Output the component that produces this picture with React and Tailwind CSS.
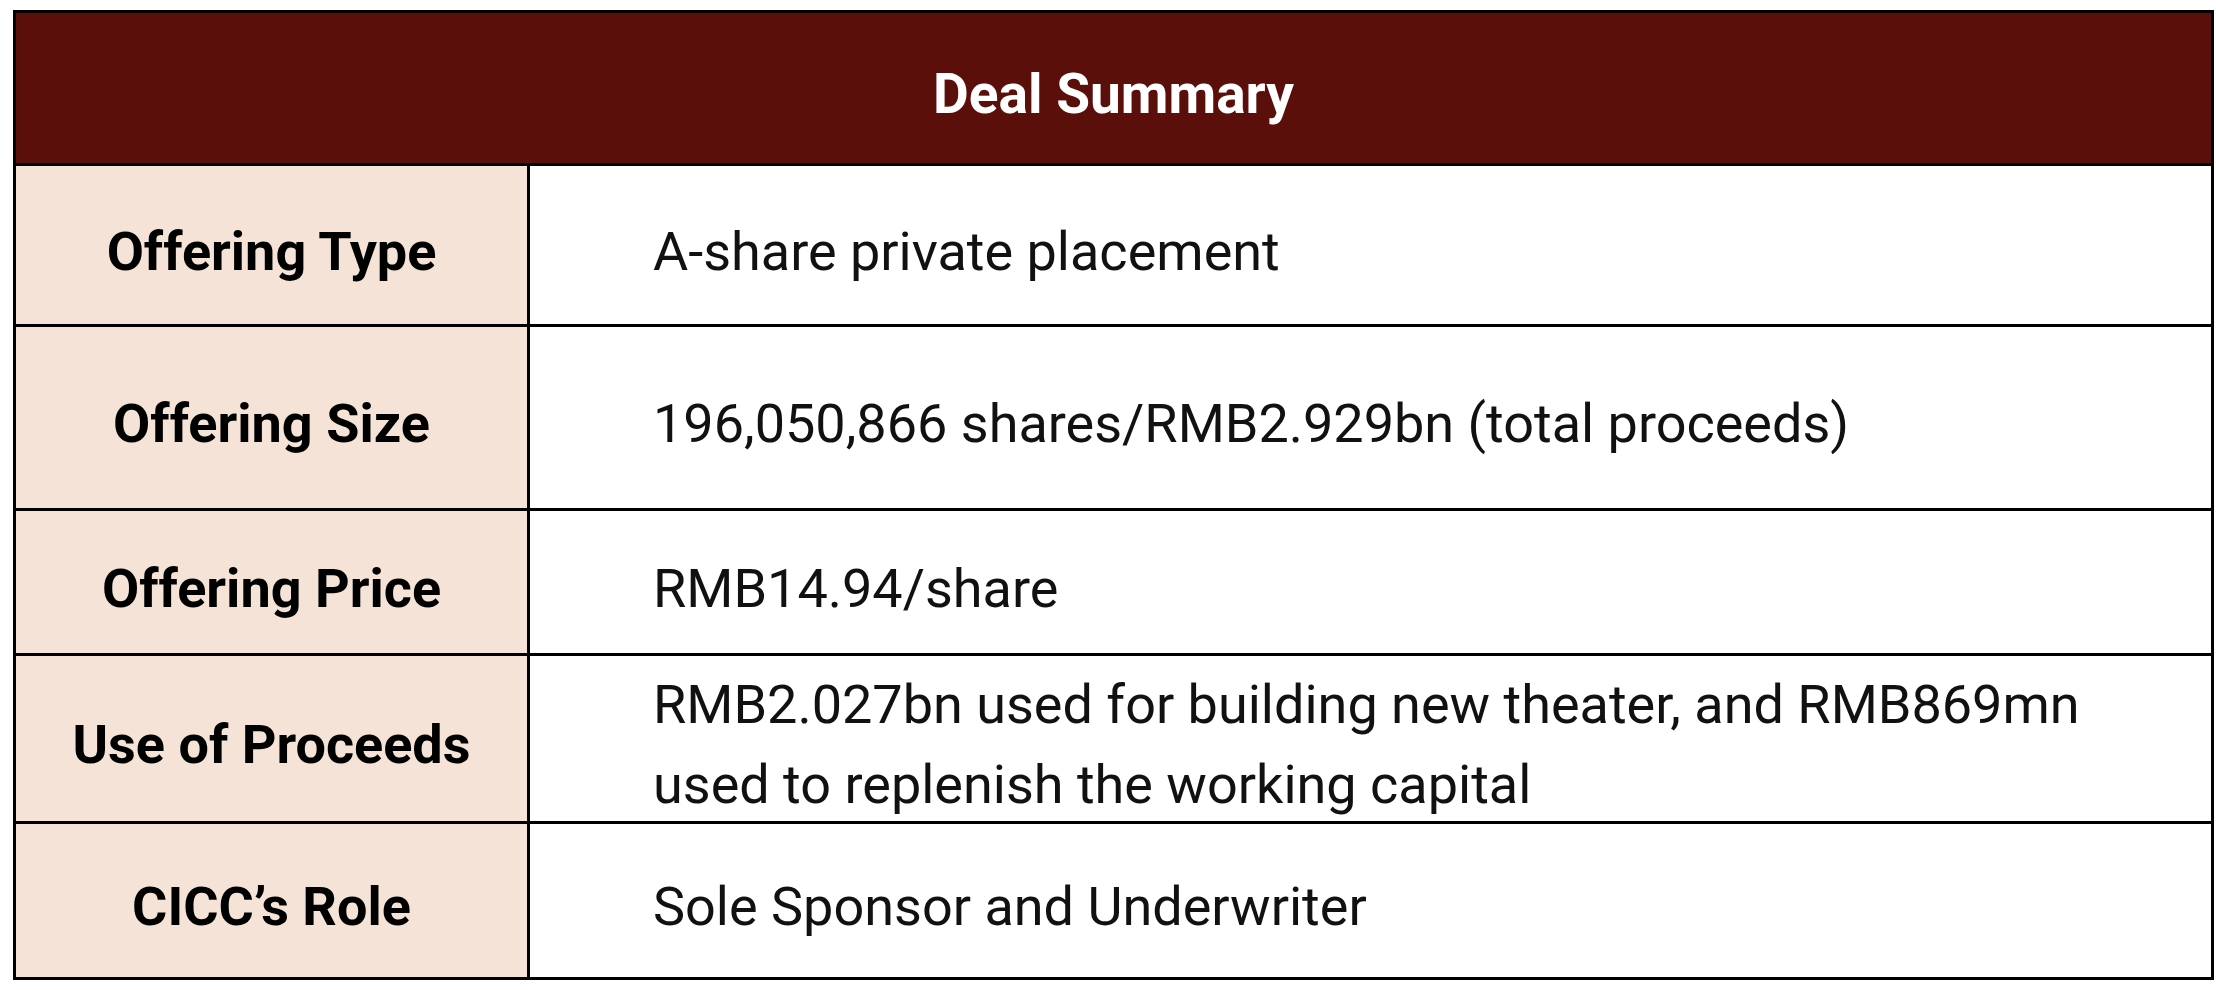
import React from "react";

const rows = [
  { label: "Offering Type", value: ["A-share private placement"], h: "h-[161px]", border: true },
  { label: "Offering Size", value: ["196,050,866 shares/RMB2.929bn (total proceeds)"], h: "h-[184px]", border: true },
  { label: "Offering Price", value: ["RMB14.94/share"], h: "h-[145px]", border: true },
  {
    label: "Use of Proceeds",
    value: ["RMB2.027bn used for building new theater, and RMB869mn", "used to replenish the working capital"],
    h: "h-[168px]",
    border: true,
  },
  { label: "CICC\u2019s Role", value: ["Sole Sponsor and Underwriter"], h: "h-[153px]", border: false },
];

export default function App() {
  return (
    <div className="min-h-screen bg-white pt-[10px] pl-[13px] font-['Roboto','Liberation_Sans',sans-serif]">
      <div className="w-[2201px] border-[3px] border-black flex flex-col">
        <div className="h-[153px] bg-[#5a0f0b] border-b-[3px] border-black flex items-center justify-center pt-[12px] text-white font-bold text-[55px] leading-none">
          Deal Summary
        </div>
        {rows.map((r, i) => (
          <div
            key={i}
            className={`flex ${r.h} ${r.border ? "border-b-[3px] border-black" : ""}`}
          >
            <div className="w-[514px] shrink-0 bg-[#f5e3d7] border-r-[3px] border-black flex items-center justify-center pt-[13px] text-black font-bold text-[54px] leading-none">
              {r.label}
            </div>
            <div className="flex-1 bg-white flex flex-col justify-center pl-[123px] pt-[13px] text-[#111] text-[54px] leading-[80px]">
              {r.value.map((v, j) => (
                <div key={j}>{v}</div>
              ))}
            </div>
          </div>
        ))}
      </div>
    </div>
  );
}
